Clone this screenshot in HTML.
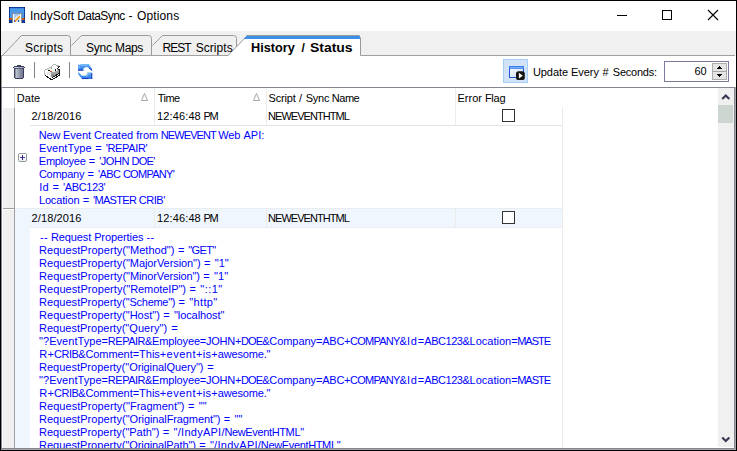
<!DOCTYPE html>
<html lang="en"><head><meta charset="utf-8"><title>IndySoft DataSync - Options</title>
<style>
html,body{margin:0;padding:0;background:#fff;}
body{width:737px;height:451px;overflow:hidden;font-family:"Liberation Sans",sans-serif;}
#win{position:relative;width:737px;height:451px;overflow:hidden;background:#fff;}
#win div,#win span,#win svg{position:absolute;}
.t{white-space:pre;display:block;font-size:11px;line-height:13px;color:#000;}
.s12{font-size:12px;line-height:14px;}
.bd{font-weight:bold;}
.bl{color:#0000ff;}
#clip{left:0;top:0;width:737px;height:448px;overflow:hidden;}
.b{background:#000;}
.strip{left:1px;top:31px;width:735px;height:24px;background:#f0f0f0;}
.ln{background:#a0a0a0;}
.gb{background:#828790;}
.ind{left:3px;width:11px;background:#f0f0f0;border-top:1px solid #fff;border-left:0;box-sizing:border-box;}
.vsep{width:1px;background:#ebebeb;}
.hsep{height:1px;background:#e4e4e4;}
.cb{width:13px;height:13px;box-sizing:border-box;border:1px solid #333;background:#fff;}

</style></head>
<body>
<div id="win">
<!-- gray tab strip -->
<div class="strip"></div>
<!-- tab outlines -->
<svg style="left:0;top:31px" width="737" height="26" viewBox="0 31 737 26" shape-rendering="auto">
  <!-- bottom line of strip -->
  <rect x="1" y="55" width="734" height="1" fill="#a0a0a0"/>
  <!-- tab 1 -->
  <path d="M2.5 55.5 L21.5 35.5 L67.5 35.5 Q70.5 35.5 70.5 38.5 L70.5 55.5" fill="#f0f0f0" stroke="#9a9a9a" stroke-width="1"/>
  <!-- tab 2 -->
  <path d="M71.5 45.5 L81.5 35.5 L148.5 35.5 Q151.5 35.5 151.5 38.5 L151.5 55.5" fill="none" stroke="#9a9a9a" stroke-width="1"/>
  <!-- tab 3 -->
  <path d="M152.5 45.5 L162.5 35.5 L233.5 35.5 Q236.5 35.5 236.5 38.5 L236.5 55.5" fill="none" stroke="#9a9a9a" stroke-width="1"/>
  <!-- active tab -->
  <path d="M227.5 56 L247.5 35.5 L358.5 35.5 L360.5 37.5 L360.5 56 Z" fill="#ffffff" stroke="none"/>
  <path d="M247 35 L359 35 L360 36 L360 39 L244 39 Z" fill="#3c8fe6"/>
  <path d="M227.5 56 L247.5 35.5 L358.5 35.5 L360.5 37.5 L360.5 55.5" fill="none" stroke="#9a9a9a" stroke-width="1"/>
  <path d="M247 36 L359 36 L360 37 L360 39 L243.5 39 Z" fill="#3c8fe6"/>
</svg>

<!-- title bar: app icon -->
<svg style="left:9px;top:7px" width="16" height="16" viewBox="0 0 16 16" shape-rendering="crispEdges"><rect x="0" y="0" width="1" height="1" fill="#061c50"/><rect x="1" y="0" width="14" height="1" fill="#0c3c9c"/><rect x="15" y="0" width="1" height="1" fill="#061c50"/><rect x="0" y="1" width="1" height="1" fill="#0c3c9c"/><rect x="1" y="1" width="14" height="1" fill="#3f8ade"/><rect x="15" y="1" width="1" height="1" fill="#0c3c9c"/><rect x="0" y="2" width="1" height="1" fill="#0c3c9c"/><rect x="1" y="2" width="14" height="1" fill="#4a98e6"/><rect x="15" y="2" width="1" height="1" fill="#0c3c9c"/><rect x="0" y="3" width="1" height="1" fill="#0c3c9c"/><rect x="1" y="3" width="14" height="1" fill="#4a98e6"/><rect x="15" y="3" width="1" height="1" fill="#0c3c9c"/><rect x="0" y="4" width="1" height="1" fill="#0c3c9c"/><rect x="1" y="4" width="14" height="1" fill="#4a98e6"/><rect x="15" y="4" width="1" height="1" fill="#0c3c9c"/><rect x="0" y="5" width="1" height="1" fill="#0c3c9c"/><rect x="1" y="5" width="14" height="1" fill="#4a98e6"/><rect x="15" y="5" width="1" height="1" fill="#0c3c9c"/><rect x="0" y="6" width="1" height="1" fill="#0c3c9c"/><rect x="1" y="6" width="2" height="1" fill="#4a98e6"/><rect x="3" y="6" width="10" height="1" fill="#8c9098"/><rect x="13" y="6" width="2" height="1" fill="#4a98e6"/><rect x="15" y="6" width="1" height="1" fill="#0c3c9c"/><rect x="0" y="7" width="1" height="1" fill="#0c3c9c"/><rect x="1" y="7" width="2" height="1" fill="#4a98e6"/><rect x="3" y="7" width="1" height="1" fill="#8c9098"/><rect x="4" y="7" width="1" height="1" fill="#ffffff"/><rect x="5" y="7" width="6" height="1" fill="#9cc6f0"/><rect x="11" y="7" width="1" height="1" fill="#ffffff"/><rect x="12" y="7" width="1" height="1" fill="#8c9098"/><rect x="13" y="7" width="2" height="1" fill="#4a98e6"/><rect x="15" y="7" width="1" height="1" fill="#0c3c9c"/><rect x="0" y="8" width="1" height="1" fill="#0c3c9c"/><rect x="1" y="8" width="2" height="1" fill="#4a98e6"/><rect x="3" y="8" width="1" height="1" fill="#8c9098"/><rect x="4" y="8" width="1" height="1" fill="#ffffff"/><rect x="5" y="8" width="1" height="1" fill="#b4d6f4"/><rect x="6" y="8" width="2" height="1" fill="#9cc6f0"/><rect x="8" y="8" width="1" height="1" fill="#b4d6f4"/><rect x="9" y="8" width="2" height="1" fill="#d4e8fa"/><rect x="11" y="8" width="1" height="1" fill="#ffffff"/><rect x="12" y="8" width="1" height="1" fill="#8c9098"/><rect x="13" y="8" width="2" height="1" fill="#4a98e6"/><rect x="15" y="8" width="1" height="1" fill="#0c3c9c"/><rect x="0" y="9" width="1" height="1" fill="#0c3c9c"/><rect x="1" y="9" width="2" height="1" fill="#4a98e6"/><rect x="3" y="9" width="1" height="1" fill="#8c9098"/><rect x="4" y="9" width="1" height="1" fill="#ffffff"/><rect x="5" y="9" width="1" height="1" fill="#b4d6f4"/><rect x="6" y="9" width="1" height="1" fill="#9cc6f0"/><rect x="7" y="9" width="2" height="1" fill="#d4e8fa"/><rect x="9" y="9" width="1" height="1" fill="#f6cc78"/><rect x="10" y="9" width="1" height="1" fill="#f0a030"/><rect x="11" y="9" width="1" height="1" fill="#ffffff"/><rect x="12" y="9" width="1" height="1" fill="#8c9098"/><rect x="13" y="9" width="2" height="1" fill="#4a98e6"/><rect x="15" y="9" width="1" height="1" fill="#0c3c9c"/><rect x="0" y="10" width="1" height="1" fill="#0c3c9c"/><rect x="1" y="10" width="2" height="1" fill="#4a98e6"/><rect x="3" y="10" width="1" height="1" fill="#8c9098"/><rect x="4" y="10" width="1" height="1" fill="#ffffff"/><rect x="5" y="10" width="1" height="1" fill="#b4d6f4"/><rect x="6" y="10" width="2" height="1" fill="#d4e8fa"/><rect x="8" y="10" width="1" height="1" fill="#f6cc78"/><rect x="9" y="10" width="2" height="1" fill="#f0a030"/><rect x="11" y="10" width="1" height="1" fill="#ffffff"/><rect x="12" y="10" width="1" height="1" fill="#8c9098"/><rect x="13" y="10" width="2" height="1" fill="#4a98e6"/><rect x="15" y="10" width="1" height="1" fill="#0c3c9c"/><rect x="0" y="11" width="1" height="1" fill="#8a2c08"/><rect x="1" y="11" width="2" height="1" fill="#c8581a"/><rect x="3" y="11" width="1" height="1" fill="#8c9098"/><rect x="4" y="11" width="1" height="1" fill="#ffffff"/><rect x="5" y="11" width="1" height="1" fill="#b4d6f4"/><rect x="6" y="11" width="1" height="1" fill="#d4e8fa"/><rect x="7" y="11" width="1" height="1" fill="#f6cc78"/><rect x="8" y="11" width="2" height="1" fill="#f0a030"/><rect x="10" y="11" width="1" height="1" fill="#d4e8fa"/><rect x="11" y="11" width="1" height="1" fill="#ffffff"/><rect x="12" y="11" width="1" height="1" fill="#8c9098"/><rect x="13" y="11" width="2" height="1" fill="#c8581a"/><rect x="15" y="11" width="1" height="1" fill="#8a2c08"/><rect x="0" y="12" width="1" height="1" fill="#8a2c08"/><rect x="1" y="12" width="2" height="1" fill="#c8581a"/><rect x="3" y="12" width="1" height="1" fill="#8c9098"/><rect x="4" y="12" width="1" height="1" fill="#ffffff"/><rect x="5" y="12" width="1" height="1" fill="#b4d6f4"/><rect x="6" y="12" width="1" height="1" fill="#f6cc78"/><rect x="7" y="12" width="2" height="1" fill="#f0a030"/><rect x="9" y="12" width="2" height="1" fill="#d4e8fa"/><rect x="11" y="12" width="1" height="1" fill="#ffffff"/><rect x="12" y="12" width="1" height="1" fill="#8c9098"/><rect x="13" y="12" width="2" height="1" fill="#c8581a"/><rect x="15" y="12" width="1" height="1" fill="#8a2c08"/><rect x="0" y="13" width="1" height="1" fill="#0c3c9c"/><rect x="1" y="13" width="2" height="1" fill="#0a3ca4"/><rect x="3" y="13" width="1" height="1" fill="#8c9098"/><rect x="4" y="13" width="1" height="1" fill="#ffffff"/><rect x="5" y="13" width="1" height="1" fill="#3a50b0"/><rect x="6" y="13" width="2" height="1" fill="#f0a030"/><rect x="8" y="13" width="1" height="1" fill="#d4e8fa"/><rect x="9" y="13" width="1" height="1" fill="#3a50b0"/><rect x="10" y="13" width="1" height="1" fill="#d4e8fa"/><rect x="11" y="13" width="1" height="1" fill="#ffffff"/><rect x="12" y="13" width="1" height="1" fill="#8c9098"/><rect x="13" y="13" width="2" height="1" fill="#0a3ca4"/><rect x="15" y="13" width="1" height="1" fill="#0c3c9c"/><rect x="0" y="14" width="1" height="1" fill="#0c3c9c"/><rect x="1" y="14" width="2" height="1" fill="#0a3ca4"/><rect x="3" y="14" width="1" height="1" fill="#8c9098"/><rect x="4" y="14" width="1" height="1" fill="#ffffff"/><rect x="5" y="14" width="1" height="1" fill="#3a50b0"/><rect x="6" y="14" width="1" height="1" fill="#f0a030"/><rect x="7" y="14" width="2" height="1" fill="#d4e8fa"/><rect x="9" y="14" width="1" height="1" fill="#3a50b0"/><rect x="10" y="14" width="1" height="1" fill="#d4e8fa"/><rect x="11" y="14" width="1" height="1" fill="#ffffff"/><rect x="12" y="14" width="1" height="1" fill="#8c9098"/><rect x="13" y="14" width="2" height="1" fill="#0a3ca4"/><rect x="15" y="14" width="1" height="1" fill="#0c3c9c"/><rect x="0" y="15" width="1" height="1" fill="#061c50"/><rect x="1" y="15" width="2" height="1" fill="#0a3ca4"/><rect x="3" y="15" width="1" height="1" fill="#8c9098"/><rect x="4" y="15" width="8" height="1" fill="#ffffff"/><rect x="12" y="15" width="1" height="1" fill="#8c9098"/><rect x="13" y="15" width="2" height="1" fill="#0a3ca4"/><rect x="15" y="15" width="1" height="1" fill="#061c50"/></svg>
<!-- window controls -->
<div class="b" style="left:617px;top:15px;width:10px;height:1px"></div>
<div style="left:662px;top:10px;width:10px;height:10px;box-sizing:border-box;border:1px solid #000"></div>
<svg style="left:707px;top:9px" width="12" height="12" viewBox="0 0 12 12"><path d="M1 1 L11 11 M11 1 L1 11" stroke="#000" stroke-width="1.1" fill="none"/></svg>

<!-- toolbar icons -->
<!-- trash -->
<svg style="left:13px;top:65px" width="12" height="14" viewBox="0 0 12 14" shape-rendering="crispEdges"><rect x="4" y="0" width="4" height="1" fill="#3c3c5e"/><rect x="1" y="1" width="10" height="1" fill="#3c3c5e"/><rect x="0" y="2" width="1" height="1" fill="#3c3c5e"/><rect x="1" y="2" width="1" height="1" fill="#b8c2c8"/><rect x="2" y="2" width="1" height="1" fill="#d2dadc"/><rect x="3" y="2" width="1" height="1" fill="#cfd8dc"/><rect x="4" y="2" width="1" height="1" fill="#c2ccd4"/><rect x="5" y="2" width="1" height="1" fill="#b4bcc8"/><rect x="6" y="2" width="2" height="1" fill="#a6aebc"/><rect x="8" y="2" width="2" height="1" fill="#989eb0"/><rect x="10" y="2" width="1" height="1" fill="#8a8ea4"/><rect x="11" y="2" width="1" height="1" fill="#3c3c5e"/><rect x="1" y="3" width="2" height="1" fill="#46486a"/><rect x="3" y="3" width="6" height="1" fill="#5a5e7c"/><rect x="9" y="3" width="2" height="1" fill="#46486a"/><rect x="1" y="4" width="1" height="1" fill="#3c3c5e"/><rect x="2" y="4" width="1" height="1" fill="#8e96a6"/><rect x="3" y="4" width="1" height="1" fill="#b4c0c8"/><rect x="4" y="4" width="1" height="1" fill="#aab4c0"/><rect x="5" y="4" width="1" height="1" fill="#9ea8b8"/><rect x="6" y="4" width="1" height="1" fill="#9498ae"/><rect x="7" y="4" width="1" height="1" fill="#8a8ca6"/><rect x="8" y="4" width="1" height="1" fill="#82849e"/><rect x="9" y="4" width="1" height="1" fill="#7a7c96"/><rect x="10" y="4" width="1" height="1" fill="#3c3c5e"/><rect x="1" y="5" width="1" height="1" fill="#3c3c5e"/><rect x="2" y="5" width="1" height="1" fill="#8e96a6"/><rect x="3" y="5" width="1" height="1" fill="#b4c0c8"/><rect x="4" y="5" width="1" height="1" fill="#aab4c0"/><rect x="5" y="5" width="1" height="1" fill="#9ea8b8"/><rect x="6" y="5" width="1" height="1" fill="#9498ae"/><rect x="7" y="5" width="1" height="1" fill="#8a8ca6"/><rect x="8" y="5" width="1" height="1" fill="#82849e"/><rect x="9" y="5" width="1" height="1" fill="#7a7c96"/><rect x="10" y="5" width="1" height="1" fill="#3c3c5e"/><rect x="1" y="6" width="1" height="1" fill="#3c3c5e"/><rect x="2" y="6" width="1" height="1" fill="#8e96a6"/><rect x="3" y="6" width="1" height="1" fill="#b4c0c8"/><rect x="4" y="6" width="1" height="1" fill="#aab4c0"/><rect x="5" y="6" width="1" height="1" fill="#9ea8b8"/><rect x="6" y="6" width="1" height="1" fill="#9498ae"/><rect x="7" y="6" width="1" height="1" fill="#8a8ca6"/><rect x="8" y="6" width="1" height="1" fill="#82849e"/><rect x="9" y="6" width="1" height="1" fill="#7a7c96"/><rect x="10" y="6" width="1" height="1" fill="#3c3c5e"/><rect x="1" y="7" width="1" height="1" fill="#3c3c5e"/><rect x="2" y="7" width="1" height="1" fill="#8e96a6"/><rect x="3" y="7" width="1" height="1" fill="#b4c0c8"/><rect x="4" y="7" width="1" height="1" fill="#aab4c0"/><rect x="5" y="7" width="1" height="1" fill="#9ea8b8"/><rect x="6" y="7" width="1" height="1" fill="#9498ae"/><rect x="7" y="7" width="1" height="1" fill="#8a8ca6"/><rect x="8" y="7" width="1" height="1" fill="#82849e"/><rect x="9" y="7" width="1" height="1" fill="#7a7c96"/><rect x="10" y="7" width="1" height="1" fill="#3c3c5e"/><rect x="1" y="8" width="1" height="1" fill="#3c3c5e"/><rect x="2" y="8" width="1" height="1" fill="#8e96a6"/><rect x="3" y="8" width="1" height="1" fill="#b4c0c8"/><rect x="4" y="8" width="1" height="1" fill="#aab4c0"/><rect x="5" y="8" width="1" height="1" fill="#9ea8b8"/><rect x="6" y="8" width="1" height="1" fill="#9498ae"/><rect x="7" y="8" width="1" height="1" fill="#8a8ca6"/><rect x="8" y="8" width="1" height="1" fill="#82849e"/><rect x="9" y="8" width="1" height="1" fill="#7a7c96"/><rect x="10" y="8" width="1" height="1" fill="#3c3c5e"/><rect x="1" y="9" width="1" height="1" fill="#3c3c5e"/><rect x="2" y="9" width="1" height="1" fill="#8e96a6"/><rect x="3" y="9" width="1" height="1" fill="#b4c0c8"/><rect x="4" y="9" width="1" height="1" fill="#aab4c0"/><rect x="5" y="9" width="1" height="1" fill="#9ea8b8"/><rect x="6" y="9" width="1" height="1" fill="#9498ae"/><rect x="7" y="9" width="1" height="1" fill="#8a8ca6"/><rect x="8" y="9" width="1" height="1" fill="#82849e"/><rect x="9" y="9" width="1" height="1" fill="#7a7c96"/><rect x="10" y="9" width="1" height="1" fill="#3c3c5e"/><rect x="1" y="10" width="1" height="1" fill="#3c3c5e"/><rect x="2" y="10" width="1" height="1" fill="#8e96a6"/><rect x="3" y="10" width="1" height="1" fill="#b4c0c8"/><rect x="4" y="10" width="1" height="1" fill="#aab4c0"/><rect x="5" y="10" width="1" height="1" fill="#9ea8b8"/><rect x="6" y="10" width="1" height="1" fill="#9498ae"/><rect x="7" y="10" width="1" height="1" fill="#8a8ca6"/><rect x="8" y="10" width="1" height="1" fill="#82849e"/><rect x="9" y="10" width="1" height="1" fill="#7a7c96"/><rect x="10" y="10" width="1" height="1" fill="#3c3c5e"/><rect x="1" y="11" width="1" height="1" fill="#3c3c5e"/><rect x="2" y="11" width="1" height="1" fill="#8e96a6"/><rect x="3" y="11" width="1" height="1" fill="#b4c0c8"/><rect x="4" y="11" width="1" height="1" fill="#aab4c0"/><rect x="5" y="11" width="1" height="1" fill="#9ea8b8"/><rect x="6" y="11" width="1" height="1" fill="#9498ae"/><rect x="7" y="11" width="1" height="1" fill="#8a8ca6"/><rect x="8" y="11" width="1" height="1" fill="#82849e"/><rect x="9" y="11" width="1" height="1" fill="#7a7c96"/><rect x="10" y="11" width="1" height="1" fill="#3c3c5e"/><rect x="1" y="12" width="1" height="1" fill="#3c3c5e"/><rect x="2" y="12" width="1" height="1" fill="#8e96a6"/><rect x="3" y="12" width="1" height="1" fill="#b4c0c8"/><rect x="4" y="12" width="1" height="1" fill="#aab4c0"/><rect x="5" y="12" width="1" height="1" fill="#9ea8b8"/><rect x="6" y="12" width="1" height="1" fill="#9498ae"/><rect x="7" y="12" width="1" height="1" fill="#8a8ca6"/><rect x="8" y="12" width="1" height="1" fill="#82849e"/><rect x="9" y="12" width="1" height="1" fill="#7a7c96"/><rect x="10" y="12" width="1" height="1" fill="#3c3c5e"/><rect x="2" y="13" width="8" height="1" fill="#3c3c5e"/></svg>
<div style="left:34px;top:62px;width:1px;height:16px;background:#7f858f"></div>
<!-- printer -->
<svg style="left:44px;top:64px" width="16" height="16" viewBox="0 0 16 16" shape-rendering="crispEdges"><rect x="9" y="0" width="3" height="1" fill="#b4b8b4"/><rect x="8" y="1" width="1" height="1" fill="#b4b8b4"/><rect x="9" y="1" width="3" height="1" fill="#ffffff"/><rect x="12" y="1" width="3" height="1" fill="#b4b8b4"/><rect x="7" y="2" width="1" height="1" fill="#b4b8b4"/><rect x="8" y="2" width="5" height="1" fill="#ffffff"/><rect x="13" y="2" width="1" height="1" fill="#b4b8b4"/><rect x="14" y="2" width="1" height="1" fill="#5a5a5a"/><rect x="15" y="2" width="1" height="1" fill="#161616"/><rect x="5" y="3" width="3" height="1" fill="#b4b8b4"/><rect x="8" y="3" width="6" height="1" fill="#ffffff"/><rect x="14" y="3" width="1" height="1" fill="#161616"/><rect x="3" y="4" width="2" height="1" fill="#b4b8b4"/><rect x="5" y="4" width="2" height="1" fill="#e6eae6"/><rect x="7" y="4" width="1" height="1" fill="#a4a4a4"/><rect x="8" y="4" width="5" height="1" fill="#ffffff"/><rect x="13" y="4" width="1" height="1" fill="#161616"/><rect x="1" y="5" width="2" height="1" fill="#b4b8b4"/><rect x="3" y="5" width="4" height="1" fill="#e6eae6"/><rect x="7" y="5" width="1" height="1" fill="#f4f6f4"/><rect x="8" y="5" width="3" height="1" fill="#ffffff"/><rect x="11" y="5" width="1" height="1" fill="#161616"/><rect x="12" y="5" width="1" height="1" fill="#ffffff"/><rect x="13" y="5" width="1" height="1" fill="#b4b8b4"/><rect x="14" y="5" width="2" height="1" fill="#161616"/><rect x="0" y="6" width="1" height="1" fill="#b4b8b4"/><rect x="1" y="6" width="3" height="1" fill="#ffffff"/><rect x="4" y="6" width="2" height="1" fill="#161616"/><rect x="6" y="6" width="3" height="1" fill="#e6eae6"/><rect x="9" y="6" width="1" height="1" fill="#f4f6f4"/><rect x="10" y="6" width="1" height="1" fill="#ffffff"/><rect x="11" y="6" width="1" height="1" fill="#161616"/><rect x="12" y="6" width="1" height="1" fill="#ffffff"/><rect x="13" y="6" width="1" height="1" fill="#b4b8b4"/><rect x="14" y="6" width="1" height="1" fill="#a4a4a4"/><rect x="15" y="6" width="1" height="1" fill="#161616"/><rect x="0" y="7" width="1" height="1" fill="#b4b8b4"/><rect x="1" y="7" width="5" height="1" fill="#ffffff"/><rect x="6" y="7" width="2" height="1" fill="#c8541a"/><rect x="8" y="7" width="3" height="1" fill="#e6eae6"/><rect x="11" y="7" width="4" height="1" fill="#a4a4a4"/><rect x="15" y="7" width="1" height="1" fill="#161616"/><rect x="0" y="8" width="1" height="1" fill="#b4b8b4"/><rect x="1" y="8" width="1" height="1" fill="#ffffff"/><rect x="2" y="8" width="1" height="1" fill="#f4f6f4"/><rect x="3" y="8" width="4" height="1" fill="#e6eae6"/><rect x="7" y="8" width="7" height="1" fill="#a4a4a4"/><rect x="14" y="8" width="1" height="1" fill="#8e8e8e"/><rect x="15" y="8" width="1" height="1" fill="#161616"/><rect x="0" y="9" width="1" height="1" fill="#b4b8b4"/><rect x="1" y="9" width="1" height="1" fill="#ffffff"/><rect x="2" y="9" width="1" height="1" fill="#f4f6f4"/><rect x="3" y="9" width="4" height="1" fill="#e6eae6"/><rect x="7" y="9" width="6" height="1" fill="#a4a4a4"/><rect x="13" y="9" width="1" height="1" fill="#8e8e8e"/><rect x="14" y="9" width="2" height="1" fill="#161616"/><rect x="0" y="10" width="1" height="1" fill="#b4b8b4"/><rect x="1" y="10" width="6" height="1" fill="#e6eae6"/><rect x="7" y="10" width="5" height="1" fill="#8e8e8e"/><rect x="12" y="10" width="2" height="1" fill="#161616"/><rect x="15" y="10" width="1" height="1" fill="#161616"/><rect x="1" y="11" width="1" height="1" fill="#161616"/><rect x="2" y="11" width="4" height="1" fill="#ffffff"/><rect x="6" y="11" width="1" height="1" fill="#e6eae6"/><rect x="7" y="11" width="4" height="1" fill="#8e8e8e"/><rect x="11" y="11" width="2" height="1" fill="#161616"/><rect x="14" y="11" width="2" height="1" fill="#161616"/><rect x="2" y="12" width="2" height="1" fill="#161616"/><rect x="4" y="12" width="2" height="1" fill="#ffffff"/><rect x="6" y="12" width="1" height="1" fill="#e6eae6"/><rect x="7" y="12" width="1" height="1" fill="#a4a4a4"/><rect x="8" y="12" width="1" height="1" fill="#8e8e8e"/><rect x="9" y="12" width="2" height="1" fill="#161616"/><rect x="12" y="12" width="2" height="1" fill="#161616"/><rect x="3" y="13" width="2" height="1" fill="#161616"/><rect x="5" y="13" width="1" height="1" fill="#ffffff"/><rect x="6" y="13" width="2" height="1" fill="#e6eae6"/><rect x="8" y="13" width="1" height="1" fill="#161616"/><rect x="11" y="13" width="2" height="1" fill="#161616"/><rect x="5" y="14" width="2" height="1" fill="#161616"/><rect x="9" y="14" width="2" height="1" fill="#161616"/><rect x="6" y="15" width="3" height="1" fill="#161616"/></svg>
<div style="left:69px;top:62px;width:1px;height:16px;background:#7f858f"></div>
<!-- refresh -->
<svg style="left:78px;top:64px" width="15" height="16" viewBox="78 64 15 16">
  <defs><linearGradient id="rg" x1="0" x2="0" y1="0" y2="1"><stop offset="0" stop-color="#62aefa"/><stop offset="1" stop-color="#2c74e8"/></linearGradient></defs>
  <path d="M78 64 L79.2 65 L81.5 64 L88.6 64 L92.1 69 L92.1 70.6 L91.2 70.6 L88.7 67.2 L85.3 67.2 L83 69 L83.6 70.6 L78 70.6 Z" fill="url(#rg)"/>
  <path d="M78 70.2 L83.5 70.2 M88.5 67.7 L92.2 70.4" stroke="#1232b4" stroke-width="0.9" fill="none"/>
  <path d="M79 66 L79 68.5 M81 65 L87.5 65" stroke="#9ccaf8" stroke-width="0.9" fill="none"/>
  <path d="M92.1 79 L82 79 L78 74 L78 72.4 L79.1 72.4 L81.9 75.8 L85.3 75.8 L87.6 74 L87 72.4 L92.1 72.4 Z" fill="url(#rg)"/>
  <path d="M82 78.6 L88.5 78.6 M91.8 73 L91.8 79" stroke="#1232b4" stroke-width="0.9" fill="none"/>
  <path d="M88.5 73.2 L91 73.2 M86 76.5 L88.5 74.5" stroke="#9ccaf8" stroke-width="0.9" fill="none"/>
</svg>

<!-- auto-update toggle button -->
<div style="left:503px;top:59px;width:25px;height:24px;box-sizing:border-box;background:#d2e2f8;border:1px solid #a2d0fa"></div>
<svg style="left:508px;top:65px" width="18" height="17" viewBox="0 0 18 17">
  <defs><linearGradient id="wg" x1="0" x2="1" y1="0" y2="1"><stop offset="0" stop-color="#ffffff"/><stop offset="1" stop-color="#c4d8f0"/></linearGradient></defs>
  <rect x="1.5" y="1.5" width="14" height="11" fill="url(#wg)" stroke="#2458d0" stroke-width="1"/>
  <rect x="1" y="1" width="15" height="3" fill="#3a7cec"/>
  <rect x="2" y="2" width="13" height="1.5" fill="#74acf6"/>
  <rect x="8" y="6.2" width="8.8" height="8.8" rx="2.6" fill="#141414"/>
  <path d="M10.9 7.8 L14.8 10.7 L10.9 13.6 Z" fill="#fbf8e8"/>
</svg>

<!-- spin edit -->
<div style="left:664px;top:61px;width:65px;height:21px;box-sizing:border-box;border:1px solid #7a7a9c;background:#fff"></div>
<div style="left:712px;top:63px;width:15px;height:17px;box-sizing:border-box;border:1px solid #adadad;background:#e4e4e4"></div>
<div style="left:712px;top:71px;width:15px;height:1px;background:#a6a6a6"></div>
<svg style="left:717px;top:66px" width="5" height="11" viewBox="0 0 5 11" shape-rendering="crispEdges"><path d="M2 0h1v1h1v1h1v1h-5v-1h1v-1h1z M0 8h5v1h-1v1h-1v1h-1v-1h-1v-1h-1z" fill="#000"/></svg>

<div style="left:1px;top:56px;width:1px;height:31px;background:#9a9a9a"></div>
<!-- grid frame -->
<div class="gb" style="left:1px;top:87px;width:734px;height:1px"></div>
<div class="gb" style="left:1px;top:87px;width:1px;height:362px"></div>
<div class="gb" style="left:734px;top:87px;width:1px;height:362px"></div>
<div class="gb" style="left:1px;top:448px;width:734px;height:1px"></div>
<div style="left:735px;top:87px;width:1px;height:363px;background:#a8a8a8"></div>
<div style="left:1px;top:449px;width:735px;height:1px;background:#a8a8a8"></div>

<!-- indicator column -->
<div style="left:14px;top:88px;width:1px;height:20px;background:#d8d8d8"></div>
<div style="left:14px;top:108px;width:1px;height:340px;background:#a0a0a0"></div>
<div class="ind" style="top:108px;height:100px;border-top:0"></div>
<div class="ln" style="left:3px;top:208px;width:12px;height:1px"></div>
<div class="ind" style="top:209px;height:239px"></div>

<!-- record 2 shading -->
<div style="left:15px;top:208px;width:547px;height:20px;background:#f0f6fe"></div>
<div style="left:15px;top:208px;width:547px;height:1px;background:#e9edf2"></div>
<div style="left:30px;top:227px;width:532px;height:1px;background:#e9edf2"></div>
<div style="left:15px;top:228px;width:15px;height:220px;background:#f0f6fe"></div>

<!-- column separators -->
<div class="vsep" style="left:154px;top:88px;width:1px;height:38px"></div>
<div class="vsep" style="left:266px;top:88px;width:1px;height:38px"></div>
<div class="vsep" style="left:455px;top:88px;width:1px;height:38px"></div>
<div class="vsep" style="left:154px;top:208px;width:1px;height:20px"></div>
<div class="vsep" style="left:266px;top:208px;width:1px;height:20px"></div>
<div class="vsep" style="left:455px;top:208px;width:1px;height:20px"></div>
<div class="vsep" style="left:562px;top:107px;width:1px;height:341px"></div>
<div class="hsep" style="left:30px;top:125px;width:532px"></div>

<!-- sort glyphs -->
<svg style="left:140px;top:92px" width="10" height="10" viewBox="0 0 10 10"><path d="M1.5 8.5 L4.5 1.5 L7.5 8.5 Z" fill="none" stroke="#a6a6a6" stroke-width="1"/></svg>
<svg style="left:252px;top:92px" width="10" height="10" viewBox="0 0 10 10"><path d="M1.5 8.5 L4.5 1.5 L7.5 8.5 Z" fill="none" stroke="#a6a6a6" stroke-width="1"/></svg>

<!-- checkboxes -->
<div class="cb" style="left:502px;top:109px"></div>
<div class="cb" style="left:502px;top:211px"></div>

<!-- expand button -->
<div style="left:18px;top:153px;width:9px;height:9px;box-sizing:border-box;border:1px solid #8c9a9c;border-radius:1.5px;background:linear-gradient(#fff 50%,#e8ebe8)"></div>
<div style="left:20px;top:157px;width:5px;height:1px;background:#4a34c4"></div>
<div style="left:22px;top:155px;width:1px;height:5px;background:#2a2478"></div>

<!-- vertical scrollbar -->
<div style="left:718px;top:88px;width:16px;height:359px;background:#f0f0f0"></div>
<div style="left:718px;top:105px;width:15px;height:18px;background:#cdd5d0"></div>
<svg style="left:718px;top:88px" width="16" height="17" viewBox="0 0 16 17"><path d="M4.2 11 L7.75 7.45 L11.3 11" fill="none" stroke="#3a3a55" stroke-width="2.2"/></svg>
<svg style="left:718px;top:431px" width="16" height="17" viewBox="0 0 16 17"><path d="M4.2 6.5 L7.75 10.05 L11.3 6.5" fill="none" stroke="#3a3a55" stroke-width="2.2"/></svg>

<!-- outer window border -->
<div class="b" style="left:0;top:0;width:737px;height:1px"></div>
<div class="b" style="left:0;top:0;width:1px;height:451px"></div>
<div class="b" style="left:736px;top:0;width:1px;height:451px"></div>
<div class="b" style="left:0;top:450px;width:737px;height:1px"></div>

<div id="clip">
<span class="t s12" style="left:30.00px;top:9px;">IndySoft </span>
<span class="t s12" style="left:77.20px;top:9px;letter-spacing:-0.557px;">DataSync </span>
<span class="t s12" style="left:128.60px;top:9px;">- </span>
<span class="t s12" style="left:137.00px;top:9px;letter-spacing:0.133px;">Options</span>
<span class="t s12" style="left:25.00px;top:41px;letter-spacing:0.233px;">Scripts</span>
<span class="t s12" style="left:86.00px;top:41px;letter-spacing:-0.233px;">Sync </span>
<span class="t s12" style="left:115.00px;top:41px;letter-spacing:-0.333px;">Maps</span>
<span class="t s12" style="left:162.60px;top:41px;letter-spacing:-0.967px;">REST </span>
<span class="t s12" style="left:195.70px;top:41px;letter-spacing:0.050px;">Scripts</span>
<span class="t s12 bd" style="left:251.34px;top:41px;transform:scaleX(1.0575);transform-origin:0 0;">History </span>
<span class="t s12 bd" style="left:301.40px;top:41px;">/ </span>
<span class="t s12 bd" style="left:310.24px;top:41px;transform:scaleX(1.1600);transform-origin:0 0;">Status</span>
<span class="t" style="left:532.96px;top:66px;letter-spacing:-0.080px;">Update </span>
<span class="t" style="left:570.95px;top:66px;letter-spacing:-0.035px;">Every </span>
<span class="t" style="left:602.40px;top:66px;letter-spacing:0.902px;"># </span>
<span class="t" style="left:612.82px;top:66px;letter-spacing:-0.239px;">Seconds:</span>
<span class="t" style="left:694.44px;top:65px;letter-spacing:-0.125px;">60</span>
<span class="t" style="left:16.73px;top:92px;letter-spacing:0.053px;">Date</span>
<span class="t" style="left:157.74px;top:92px;letter-spacing:-0.512px;">Time</span>
<span class="t" style="left:268.44px;top:92px;letter-spacing:-0.127px;">Script </span>
<span class="t" style="left:299.04px;top:92px;letter-spacing:0.472px;">/ </span>
<span class="t" style="left:305.74px;top:92px;letter-spacing:-0.251px;">Sync </span>
<span class="t" style="left:331.87px;top:92px;letter-spacing:-0.518px;">Name</span>
<span class="t" style="left:457.50px;top:92px;letter-spacing:0.007px;">Error </span>
<span class="t" style="left:484.91px;top:92px;letter-spacing:-0.252px;">Flag</span>
<span class="t" style="left:31.56px;top:110px;letter-spacing:0.118px;">2/18/2016</span>
<span class="t" style="left:157.06px;top:110px;letter-spacing:0.125px;">12:46:48 </span>
<span class="t" style="left:203.38px;top:110px;letter-spacing:-1.250px;">PM</span>
<span class="t" style="left:268.03px;top:110px;letter-spacing:-0.948px;">NEWEVENTHTML</span>
<span class="t" style="left:31.56px;top:212px;letter-spacing:0.118px;">2/18/2016</span>
<span class="t" style="left:157.06px;top:212px;letter-spacing:0.125px;">12:46:48 </span>
<span class="t" style="left:203.38px;top:212px;letter-spacing:-1.250px;">PM</span>
<span class="t" style="left:268.03px;top:212px;letter-spacing:-0.948px;">NEWEVENTHTML</span>
<span class="t bl" style="left:38.87px;top:129px;letter-spacing:-0.255px;">New </span>
<span class="t bl" style="left:63.03px;top:129px;letter-spacing:-0.022px;">Event </span>
<span class="t bl" style="left:94.09px;top:129px;letter-spacing:-0.016px;">Created </span>
<span class="t bl" style="left:136.17px;top:129px;">from </span>
<span class="t bl" style="left:160.77px;top:129px;letter-spacing:-0.900px;">NEWEVENT </span>
<span class="t bl" style="left:218.26px;top:129px;letter-spacing:-0.110px;">Web </span>
<span class="t bl" style="left:243.39px;top:129px;letter-spacing:0.060px;">API:</span>
<span class="t bl" style="left:39.03px;top:142px;letter-spacing:0.067px;">EventType </span>
<span class="t bl" style="left:95.13px;top:142px;letter-spacing:0.830px;">= </span>
<span class="t bl" style="left:105.69px;top:142px;letter-spacing:-0.351px;">'REPAIR'</span>
<span class="t bl" style="left:38.86px;top:155px;letter-spacing:-0.289px;">Employee </span>
<span class="t bl" style="left:88.78px;top:155px;letter-spacing:0.801px;">= </span>
<span class="t bl" style="left:99.23px;top:155px;letter-spacing:-0.476px;">'JOHN </span>
<span class="t bl" style="left:131.38px;top:155px;letter-spacing:-0.689px;">DOE'</span>
<span class="t bl" style="left:38.88px;top:168px;letter-spacing:-0.250px;">Company </span>
<span class="t bl" style="left:87.53px;top:168px;letter-spacing:0.774px;">= </span>
<span class="t bl" style="left:97.90px;top:168px;letter-spacing:-0.541px;">'ABC </span>
<span class="t bl" style="left:122.89px;top:168px;letter-spacing:-0.719px;">COMPANY'</span>
<span class="t bl" style="left:39.14px;top:181px;letter-spacing:0.281px;">Id </span>
<span class="t bl" style="left:52.47px;top:181px;letter-spacing:0.791px;">= </span>
<span class="t bl" style="left:62.96px;top:181px;letter-spacing:-0.365px;">'ABC123'</span>
<span class="t bl" style="left:38.93px;top:194px;letter-spacing:-0.142px;">Location </span>
<span class="t bl" style="left:82.78px;top:194px;letter-spacing:0.806px;">= </span>
<span class="t bl" style="left:93.12px;top:194px;letter-spacing:-0.701px;">'MASTER </span>
<span class="t bl" style="left:138.66px;top:194px;letter-spacing:-0.432px;">CRIB'</span>
<span class="t bl" style="left:40.11px;top:231px;letter-spacing:0.216px;">-- </span>
<span class="t bl" style="left:50.98px;top:231px;letter-spacing:-0.110px;">Request </span>
<span class="t bl" style="left:94.14px;top:231px;letter-spacing:-0.093px;">Properties </span>
<span class="t bl" style="left:146.55px;top:231px;letter-spacing:0.350px;">--</span>
<span class="t bl" style="left:39.03px;top:244px;letter-spacing:0.050px;">RequestProperty("</span>
<span class="t bl" style="left:129.99px;top:244px;letter-spacing:0.020px;">Method") </span>
<span class="t bl" style="left:177.90px;top:244px;letter-spacing:0.818px;">= </span>
<span class="t bl" style="left:188.29px;top:244px;letter-spacing:-0.626px;">"GET"</span>
<span class="t bl" style="left:39.02px;top:257px;letter-spacing:0.043px;">RequestProperty("</span>
<span class="t bl" style="left:129.82px;top:257px;letter-spacing:-0.075px;">MajorVersion") </span>
<span class="t bl" style="left:203.97px;top:257px;letter-spacing:0.810px;">= </span>
<span class="t bl" style="left:214.70px;top:257px;letter-spacing:0.066px;">"1"</span>
<span class="t bl" style="left:39.03px;top:270px;letter-spacing:0.055px;">RequestProperty("</span>
<span class="t bl" style="left:129.99px;top:270px;letter-spacing:-0.132px;">MinorVersion") </span>
<span class="t bl" style="left:203.32px;top:270px;letter-spacing:0.823px;">= </span>
<span class="t bl" style="left:214.07px;top:270px;letter-spacing:0.076px;">"1"</span>
<span class="t bl" style="left:39.03px;top:283px;letter-spacing:0.063px;">RequestProperty("</span>
<span class="t bl" style="left:130.16px;top:283px;letter-spacing:-0.071px;">RemoteIP") </span>
<span class="t bl" style="left:189.38px;top:283px;letter-spacing:0.831px;">= </span>
<span class="t bl" style="left:200.33px;top:283px;letter-spacing:0.449px;">"::1"</span>
<span class="t bl" style="left:39.02px;top:296px;letter-spacing:0.035px;">RequestProperty("</span>
<span class="t bl" style="left:129.57px;top:296px;letter-spacing:-0.289px;">Scheme") </span>
<span class="t bl" style="left:178.49px;top:296px;letter-spacing:0.801px;">= </span>
<span class="t bl" style="left:189.35px;top:296px;letter-spacing:0.342px;">"http"</span>
<span class="t bl" style="left:39.02px;top:309px;letter-spacing:0.033px;">RequestProperty("</span>
<span class="t bl" style="left:129.68px;top:309px;">Host") </span>
<span class="t bl" style="left:163.34px;top:309px;letter-spacing:0.800px;">= </span>
<span class="t bl" style="left:173.98px;top:309px;letter-spacing:-0.078px;">"localhost"</span>
<span class="t bl" style="left:39.00px;top:322px;letter-spacing:0.008px;">RequestProperty("</span>
<span class="t bl" style="left:129.29px;top:322px;letter-spacing:0.066px;">Query") </span>
<span class="t bl" style="left:171.17px;top:322px;letter-spacing:1.586px;">=</span>
<span class="t bl" style="left:39.03px;top:335px;letter-spacing:0.055px;">"?EventType=</span>
<span class="t bl" style="left:107.85px;top:335px;letter-spacing:-0.489px;">REPAIR&amp;</span>
<span class="t bl" style="left:152.08px;top:335px;letter-spacing:-0.141px;">Employee=</span>
<span class="t bl" style="left:206.10px;top:335px;letter-spacing:-0.265px;">JOHN+</span>
<span class="t bl" style="left:240.88px;top:335px;letter-spacing:-0.787px;">DOE&amp;</span>
<span class="t bl" style="left:269.29px;top:335px;letter-spacing:-0.055px;">Company=</span>
<span class="t bl" style="left:322.26px;top:335px;letter-spacing:-0.252px;">ABC+</span>
<span class="t bl" style="left:350.05px;top:335px;letter-spacing:-0.758px;">COMPANY&amp;</span>
<span class="t bl" style="left:406.91px;top:335px;letter-spacing:0.805px;">Id=</span>
<span class="t bl" style="left:424.30px;top:335px;letter-spacing:-0.464px;">ABC123&amp;</span>
<span class="t bl" style="left:469.59px;top:335px;letter-spacing:0.006px;">Location=</span>
<span class="t bl" style="left:517.17px;top:335px;letter-spacing:-0.972px;">MASTE</span>
<span class="t bl" style="left:39.20px;top:348px;letter-spacing:0.391px;">R+</span>
<span class="t bl" style="left:53.93px;top:348px;letter-spacing:-0.460px;">CRIB&amp;</span>
<span class="t bl" style="left:85.45px;top:348px;letter-spacing:-0.069px;">Comment=</span>
<span class="t bl" style="left:139.04px;top:348px;letter-spacing:0.013px;">This+</span>
<span class="t bl" style="left:166.57px;top:348px;letter-spacing:0.506px;">event+</span>
<span class="t bl" style="left:202.83px;top:348px;letter-spacing:0.261px;">is+</span>
<span class="t bl" style="left:217.77px;top:348px;letter-spacing:-0.167px;">awesome."</span>
<span class="t bl" style="left:39.00px;top:361px;letter-spacing:0.005px;">RequestProperty("</span>
<span class="t bl" style="left:129.16px;top:361px;letter-spacing:-0.082px;">OriginalQuery") </span>
<span class="t bl" style="left:207.17px;top:361px;letter-spacing:1.581px;">=</span>
<span class="t bl" style="left:39.03px;top:374px;letter-spacing:0.055px;">"?EventType=</span>
<span class="t bl" style="left:107.85px;top:374px;letter-spacing:-0.489px;">REPAIR&amp;</span>
<span class="t bl" style="left:152.08px;top:374px;letter-spacing:-0.141px;">Employee=</span>
<span class="t bl" style="left:206.10px;top:374px;letter-spacing:-0.265px;">JOHN+</span>
<span class="t bl" style="left:240.88px;top:374px;letter-spacing:-0.787px;">DOE&amp;</span>
<span class="t bl" style="left:269.29px;top:374px;letter-spacing:-0.055px;">Company=</span>
<span class="t bl" style="left:322.26px;top:374px;letter-spacing:-0.252px;">ABC+</span>
<span class="t bl" style="left:350.05px;top:374px;letter-spacing:-0.758px;">COMPANY&amp;</span>
<span class="t bl" style="left:406.91px;top:374px;letter-spacing:0.805px;">Id=</span>
<span class="t bl" style="left:424.30px;top:374px;letter-spacing:-0.464px;">ABC123&amp;</span>
<span class="t bl" style="left:469.59px;top:374px;letter-spacing:0.006px;">Location=</span>
<span class="t bl" style="left:517.17px;top:374px;letter-spacing:-0.972px;">MASTE</span>
<span class="t bl" style="left:39.20px;top:387px;letter-spacing:0.391px;">R+</span>
<span class="t bl" style="left:53.93px;top:387px;letter-spacing:-0.460px;">CRIB&amp;</span>
<span class="t bl" style="left:85.45px;top:387px;letter-spacing:-0.069px;">Comment=</span>
<span class="t bl" style="left:139.04px;top:387px;letter-spacing:0.013px;">This+</span>
<span class="t bl" style="left:166.57px;top:387px;letter-spacing:0.506px;">event+</span>
<span class="t bl" style="left:202.83px;top:387px;letter-spacing:0.261px;">is+</span>
<span class="t bl" style="left:217.77px;top:387px;letter-spacing:-0.167px;">awesome."</span>
<span class="t bl" style="left:39.03px;top:400px;letter-spacing:0.050px;">RequestProperty("</span>
<span class="t bl" style="left:129.97px;top:400px;letter-spacing:-0.008px;">Fragment") </span>
<span class="t bl" style="left:188.00px;top:400px;letter-spacing:0.817px;">= </span>
<span class="t bl" style="left:198.78px;top:400px;letter-spacing:0.137px;">""</span>
<span class="t bl" style="left:39.01px;top:413px;letter-spacing:0.029px;">RequestProperty("</span>
<span class="t bl" style="left:129.57px;top:413px;letter-spacing:-0.103px;">OriginalFragment") </span>
<span class="t bl" style="left:223.67px;top:413px;letter-spacing:0.796px;">= </span>
<span class="t bl" style="left:234.41px;top:413px;letter-spacing:0.121px;">""</span>
<span class="t bl" style="left:39.01px;top:426px;letter-spacing:0.011px;">RequestProperty("</span>
<span class="t bl" style="left:129.30px;top:426px;letter-spacing:-0.022px;">Path") </span>
<span class="t bl" style="left:162.81px;top:426px;letter-spacing:0.777px;">= </span>
<span class="t bl" style="left:173.59px;top:426px;letter-spacing:0.263px;">"/IndyAPI/</span>
<span class="t bl" style="left:224.45px;top:426px;letter-spacing:-0.363px;">NewEventHTML"</span>
<span class="t bl" style="left:39.01px;top:439px;letter-spacing:0.017px;">RequestProperty("</span>
<span class="t bl" style="left:129.36px;top:439px;letter-spacing:-0.122px;">OriginalPath") </span>
<span class="t bl" style="left:199.13px;top:439px;letter-spacing:0.783px;">= </span>
<span class="t bl" style="left:209.93px;top:439px;letter-spacing:0.269px;">"/IndyAPI/</span>
<span class="t bl" style="left:260.85px;top:439px;letter-spacing:-0.355px;">NewEventHTML"</span>
</div>
</div>
</body></html>
